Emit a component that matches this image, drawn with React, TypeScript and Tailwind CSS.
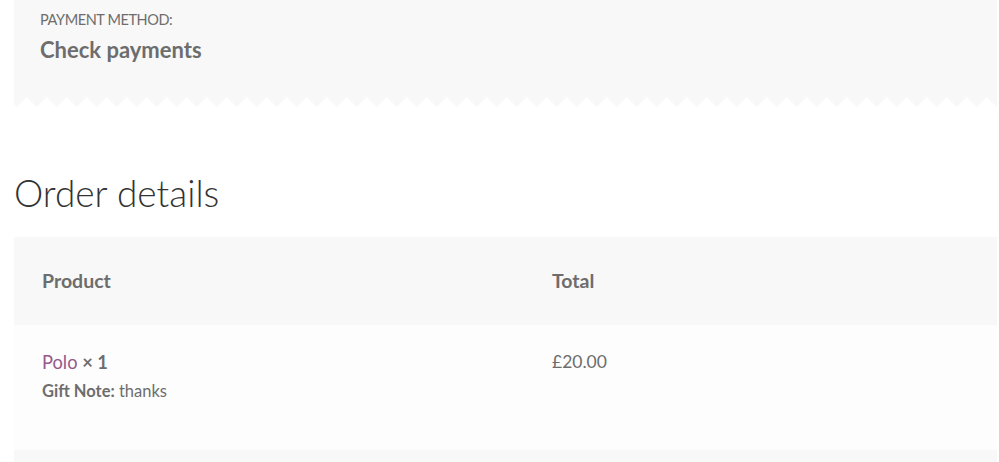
import React from "react";

function Zigzag() {
  return (
    <svg className="block w-full h-[10px]" preserveAspectRatio="none">
      <defs>
        <pattern id="zz" x="2.7" y="0" width="20" height="10" patternUnits="userSpaceOnUse">
          <polygon points="-10,0 10,0 0,10" fill="#f8f8f8" />
          <polygon points="10,0 30,0 20,10" fill="#f8f8f8" />
        </pattern>
      </defs>
      <rect x="0" y="0" width="100%" height="10" fill="url(#zz)" />
    </svg>
  );
}

export default function App() {
  return (
    <div
      className="h-[462px] overflow-hidden bg-white pl-[14px] pr-[2px] text-[#6d6d6d]"
      style={{ fontFamily: "Lato, 'Noto Sans', sans-serif" }}
    >
      <div className="bg-[#f8f8f8] h-[97px] px-[26px] pt-[10px]">
        <div className="text-[14.5px] tracking-[-0.4px] uppercase leading-[20px]">Payment method:</div>
        <div className="text-[22px] font-bold leading-[30px] mt-[5px]">Check payments</div>
      </div>
      <Zigzag />
      <h2 className="mt-[61px] text-[37px] font-light leading-[50px] text-[#333333]">Order details</h2>
      <table className="mt-[19px] w-full border-collapse">
        <thead>
          <tr className="bg-[#f8f8f8] h-[88px]">
            <th className="w-[510px] pl-[28px] text-left text-[19.5px] font-bold">Product</th>
            <th className="pl-[28px] text-left text-[19.5px] font-bold">Total</th>
          </tr>
        </thead>
        <tbody>
          <tr className="bg-[#fdfdfd] h-[125px] align-top">
            <td className="pl-[28px] pt-[25px]">
              <div className="text-[18.3px] leading-[24px]">
                <span className="text-[#96588a]">Polo</span>{" "}
                <strong className="font-bold">× 1</strong>
              </div>
              <div className="text-[16.5px] leading-[24px] mt-[5px]">
                <strong className="font-bold">Gift Note:</strong> thanks
              </div>
            </td>
            <td className="pl-[28px] pt-[25px] text-[17.5px] leading-[24px]">£20.00</td>
          </tr>
          <tr className="bg-[#f8f8f8] h-[40px]">
            <td></td>
            <td></td>
          </tr>
        </tbody>
      </table>
    </div>
  );
}
